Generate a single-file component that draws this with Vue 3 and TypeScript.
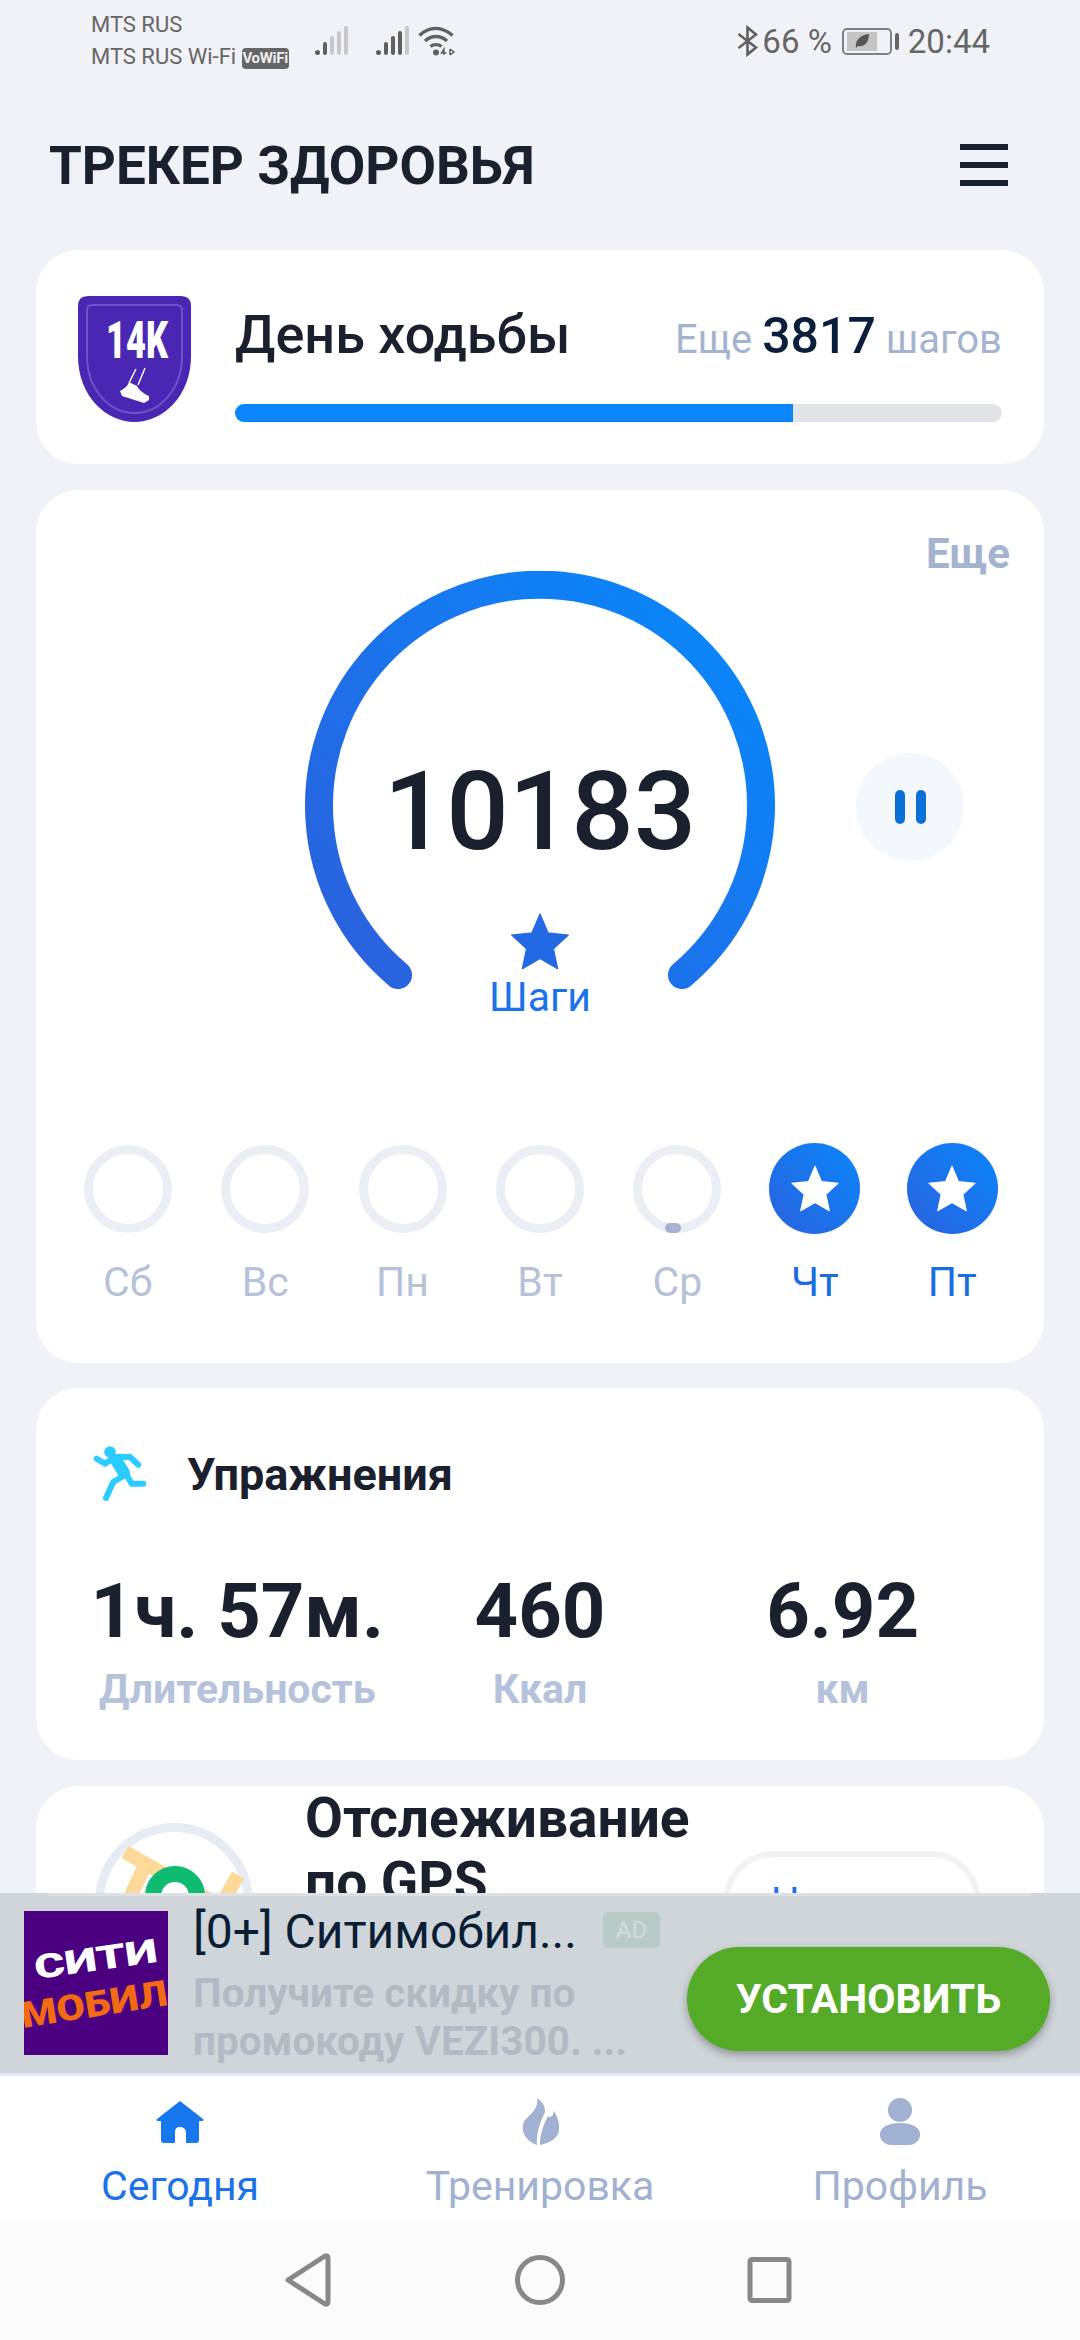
<script setup lang="ts">
import { computed } from "vue";

type DayState = "empty" | "started" | "done";

const STAR_POINTS = "12,1.5 15,8.6 22.6,9.4 17,14.5 18.6,22 12,18.2 5.4,22 7,14.5 1.4,9.4 9,8.6";
const STEP_GOAL = 14000;
const stepCount = 10183;

const stepsLeft = computed(() => STEP_GOAL - stepCount);
const goalPercent = computed(() => `${(stepCount / STEP_GOAL) * 100}%`);

const days: { label: string; state: DayState }[] = [
	{ label: "Сб", state: "empty" },
	{ label: "Вс", state: "empty" },
	{ label: "Пн", state: "empty" },
	{ label: "Вт", state: "empty" },
	{ label: "Ср", state: "started" },
	{ label: "Чт", state: "done" },
	{ label: "Пт", state: "done" }
];

const stats = [
	{ value: "1ч. 57м.", label: "Длительность" },
	{ value: "460", label: "Ккал" },
	{ value: "6.92", label: "км" }
];
</script>

<template>
	<div class="app">
		<div class="scroll">
			<div class="status">
				<div class="carriers">
					<div>MTS RUS</div>
					<div class="carrier-two">MTS RUS Wi-Fi <span class="vowifi">VoWiFi</span></div>
				</div>
				<svg class="signal first" width="34" height="30" viewBox="0 0 34 30">
					<circle cx="2.5" cy="26.5" r="2.5" fill="#606060" />
					<rect x="8" y="16" width="4" height="13" rx="2" fill="#606060" />
					<rect x="15" y="10" width="4" height="19" rx="2" fill="#c8c8c8" />
					<rect x="22" y="5" width="4" height="24" rx="2" fill="#c8c8c8" />
					<rect x="29" y="0" width="4" height="29" rx="2" fill="#c8c8c8" />
				</svg>
				<svg class="signal" width="34" height="30" viewBox="0 0 34 30">
					<circle cx="2.5" cy="26.5" r="2.5" fill="#606060" />
					<rect x="8" y="16" width="4" height="13" rx="2" fill="#606060" />
					<rect x="15" y="10" width="4" height="19" rx="2" fill="#606060" />
					<rect x="22" y="5" width="4" height="24" rx="2" fill="#606060" />
					<rect x="29" y="0" width="4" height="29" rx="2" fill="#c8c8c8" />
				</svg>
				<svg class="wifi" width="38" height="30" viewBox="0 0 38 30">
					<g fill="none" stroke="#606060" stroke-width="3.4">
						<path d="M1.5 9.5C11 0 24 0 34.5 9.5" />
						<path d="M7 15C13.5 9 22.5 9 29 15" />
						<path d="M12.5 20.5C15.5 18 20.5 18 23.5 20.5" />
					</g>
					<circle cx="18" cy="26.5" r="3" fill="#606060" />
					<path d="M26 29V23L23.5 27H28.5M32 23V29M32 23L36 26L32 29" fill="none" stroke="#606060" stroke-width="1.5" />
				</svg>
				<div class="status-right">
					<svg class="bluetooth" width="20" height="28" viewBox="0 0 20 28" overflow="visible">
						<path d="M0.5 7L18 20.5L9.5 27.5V0.5L18 7.5L0.5 21" fill="none" stroke="#606060" stroke-width="2.6" />
					</svg>
					<span class="battery-text">66 %</span>
					<div class="battery">
						<div class="battery-body">
							<div class="battery-fill">
								<svg width="16" height="16" viewBox="0 0 16 16">
									<path d="M2 15C1 7 6 2 15 1C15 9 11 14 4 13Z" fill="#555" />
								</svg>
							</div>
						</div>
						<div class="battery-nub"></div>
					</div>
					<span class="clock">20:44</span>
				</div>
			</div>

			<div class="header">
				<h1 class="title">ТРЕКЕР ЗДОРОВЬЯ</h1>
				<div class="burger">
					<span></span>
					<span></span>
					<span></span>
				</div>
			</div>

			<section class="card goal-card">
				<svg class="goal-badge" width="113" height="126" viewBox="0 0 113 126">
					<path d="M10 0H103Q113 0 113 10V60C113 100 85 126 56.5 126C28 126 0 100 0 60V10Q0 0 10 0Z" fill="#4a27b3" />
					<path d="M14 9H99Q104 9 104 14V60C104 93 82 117 56.5 117C31 117 9 93 9 60V14Q9 9 14 9Z" fill="none" stroke="#6d52c9" stroke-width="2" />
					<text x="28" y="62" font-size="52" font-weight="900" fill="#fff" textLength="62" lengthAdjust="spacingAndGlyphs">14K</text>
					<path d="M58 73L51 87M67 72L60 89" stroke="#fff" stroke-width="1.4" />
					<path d="M42 95C46 93 50 90 51 86L59 90C61 94 66 98 71 100L71 104L66 107L44 100Z" fill="#fff" />
				</svg>
				<div class="goal-body">
					<div class="goal-row">
						<span class="goal-title">День ходьбы</span>
						<span class="goal-left">Еще <b>{{ stepsLeft }}</b> шагов</span>
					</div>
					<div class="goal-track">
						<div class="goal-fill" :style="{ width: goalPercent }"></div>
					</div>
				</div>
			</section>

			<section class="card steps-card">
				<span class="more">Еще</span>
				<div class="gauge">
					<svg class="gauge-arc" width="470" height="440" viewBox="0 0 470 440">
						<defs>
							<linearGradient id="arc" gradientUnits="userSpaceOnUse" x1="60" y1="400" x2="420" y2="60">
								<stop offset="0" stop-color="#2a62de" />
								<stop offset="1" stop-color="#0a86fa" />
							</linearGradient>
						</defs>
						<path d="M93 404A221 221 0 1 1 377 404" fill="none" stroke="url(#arc)" stroke-width="28" stroke-linecap="round" />
					</svg>
					<div class="gauge-center">
						<div class="step-count">{{ stepCount }}</div>
						<svg class="gauge-star" width="64" height="64" viewBox="0 0 24 24">
							<polygon :points="STAR_POINTS" fill="#2369e4" stroke="#2369e4" stroke-width="0.5" stroke-linejoin="round" />
						</svg>
						<div class="gauge-label">Шаги</div>
					</div>
				</div>
				<button class="pause">
					<span></span>
					<span></span>
				</button>
				<div class="days">
					<div v-for="day in days" :key="day.label" class="day" :class="{ done: day.state === 'done' }">
						<div class="day-mark">
							<div v-if="day.state === 'done'" class="day-filled">
								<svg width="52" height="52" viewBox="0 0 24 24">
									<polygon :points="STAR_POINTS" fill="#fff" stroke="#fff" stroke-width="0.5" stroke-linejoin="round" />
								</svg>
							</div>
							<div v-else class="day-ring">
								<span v-if="day.state === 'started'" class="day-dot"></span>
							</div>
						</div>
						<div class="day-label">{{ day.label }}</div>
					</div>
				</div>
			</section>

			<section class="card workout-card">
				<div class="workout-head">
					<svg width="60" height="60" viewBox="0 0 60 60">
						<circle cx="20" cy="8" r="5.8" fill="#2accff" />
						<g fill="none" stroke="#2accff" stroke-linecap="round" stroke-linejoin="round">
							<path d="M6.7 14.7L15 19.7L25 13H40L48.3 20.7" stroke-width="6" />
							<path d="M26 16L34 29" stroke-width="12" />
							<path d="M35 28L41.7 39.7H53.3" stroke-width="6" />
							<path d="M31.7 33L23.3 38L16 54" stroke-width="6" />
						</g>
					</svg>
					<span class="workout-title">Упражнения</span>
				</div>
				<div class="stats">
					<div v-for="stat in stats" :key="stat.label" class="stat">
						<div class="stat-value">{{ stat.value }}</div>
						<div class="stat-label">{{ stat.label }}</div>
					</div>
				</div>
			</section>

			<section class="card gps-card">
				<svg class="gps-map" width="158" height="158" viewBox="0 0 158 158">
					<circle cx="79" cy="79" r="74.5" fill="#fff" stroke="#e6ebf4" stroke-width="9" />
					<g fill="none" stroke="#fdd898" stroke-width="14">
						<path d="M30 29L120 80" />
						<path d="M50 42L28 90" />
						<path d="M143 52L122 90" />
					</g>
					<circle cx="80" cy="73" r="22" fill="#fff" stroke="#0fbb70" stroke-width="16" />
				</svg>
				<h2 class="gps-title">Отслеживание по GPS</h2>
				<button class="gps-start">Начать</button>
			</section>
		</div>

		<aside class="ad">
			<svg class="ad-logo" width="144" height="144" viewBox="0 0 144 144">
				<rect width="144" height="144" fill="#4b0082" />
				<text x="12" y="68" transform="rotate(-8 12 68)" font-size="33" font-weight="900" fill="#fff" textLength="124" lengthAdjust="spacingAndGlyphs">СИТИ</text>
				<text x="-1" y="117" transform="rotate(-9 -1 117)" font-size="36" font-weight="900" fill="#f26a12" textLength="148" lengthAdjust="spacingAndGlyphs">МОБИЛ</text>
			</svg>
			<div class="ad-text">
				<div class="ad-head">
					<span class="ad-title">[0+] Ситимобил...</span>
					<span class="ad-tag">AD</span>
				</div>
				<p class="ad-desc">Получите скидку по<br />промокоду VEZI300. ...</p>
			</div>
			<button class="ad-install">УСТАНОВИТЬ</button>
		</aside>

		<nav class="tabs">
			<div class="tab active">
				<div class="tab-icon">
					<svg width="48" height="42" viewBox="0 0 48 42">
						<path d="M24 0L47 18Q48 20 46 20H43V39Q43 42 40 42H30V31Q29 26 24 26Q19 26 19 31V42H8Q5 42 5 39V20H2Q0 20 1 18Z" fill="#1677ee" />
					</svg>
				</div>
				<span>Сегодня</span>
			</div>
			<div class="tab">
				<div class="tab-icon">
					<svg width="38" height="47" viewBox="0 0 38 47">
						<path d="M16 0C18 10 10 16 4 22C-1 30 2 42 16 47C15 38 18 26 24 14C24 6 20 3 16 0Z" fill="#a0b1d1" />
						<path d="M33 13C32 19 29 20 27 18C22 28 19 36 19 47C34 44 40 36 38 26C37 21 35 16 33 13Z" fill="#a0b1d1" />
					</svg>
				</div>
				<span>Тренировка</span>
			</div>
			<div class="tab">
				<div class="tab-icon">
					<svg width="42" height="47" viewBox="0 0 42 47">
						<circle cx="21" cy="12" r="12" fill="#a0b1d1" />
						<path d="M21 25C33 25 42 29 41 38C40 44 34 47 30 47H12C8 47 2 44 1 38C0 29 9 25 21 25Z" fill="#a0b1d1" />
					</svg>
				</div>
				<span>Профиль</span>
			</div>
		</nav>

		<div class="sysnav">
			<svg width="60" height="60" viewBox="0 0 60 60">
				<path d="M8 30L45 6Q48 5 48 8V52Q48 55 45 54Z" fill="none" stroke="#888" stroke-width="5" stroke-linejoin="round" />
			</svg>
			<svg width="60" height="60" viewBox="0 0 60 60">
				<circle cx="30" cy="30" r="22.5" fill="none" stroke="#888" stroke-width="5" />
			</svg>
			<svg width="60" height="60" viewBox="0 0 60 60">
				<rect x="10" y="9.5" width="39" height="41" rx="2" fill="none" stroke="#888" stroke-width="5" />
			</svg>
		</div>
	</div>
</template>

<style scoped>
.app {
	display: flex;
	flex-direction: column;
	width: 1080px;
	height: 2340px;
	overflow: hidden;
	background: #f0f2f7;
	font-family: Roboto, "Noto Sans", sans-serif;
	color: #1a202e;
}

.scroll {
	flex: 1;
	min-height: 0;
	overflow: hidden;
}

/* status bar */
.status {
	display: flex;
	align-items: flex-start;
	height: 100px;
	padding: 9px 90px 0 91px;
	box-sizing: border-box;
	color: #666;
}

.carriers {
	width: 196px;
	font-size: 22px;
	line-height: 32px;
}

.carrier-two {
	white-space: nowrap;
}

.vowifi {
	display: inline-block;
	width: 47px;
	height: 21px;
	border-radius: 4px;
	background: #666;
	color: #eee;
	font-size: 15px;
	font-weight: 700;
	letter-spacing: -0.3px;
	line-height: 21px;
	text-align: center;
	vertical-align: 1px;
}

.signal {
	margin-top: 17px;
	margin-left: 27px;
}

.signal.first {
	margin-left: 28px;
}

.wifi {
	margin-top: 17px;
	margin-left: 8px;
}

.status-right {
	display: flex;
	align-items: center;
	height: 32px;
	margin-top: 16px;
	margin-left: auto;
	font-size: 33px;
}

.bluetooth {
	margin-right: -2px;
}

.battery-text {
	margin-left: 6px;
}

.battery {
	display: flex;
	align-items: center;
	margin-left: 10px;
	margin-right: 9px;
}

.battery-body {
	width: 50px;
	height: 27px;
	padding: 2px 3px;
	box-sizing: border-box;
	border: 2px solid #808080;
	border-radius: 5px;
}

.battery-fill {
	display: flex;
	align-items: center;
	justify-content: center;
	width: 30px;
	height: 100%;
	background: #c4c4c4;
}

.battery-nub {
	width: 4px;
	height: 17px;
	margin-left: 3px;
	border-radius: 2px;
	background: #666;
}

/* page header */
.header {
	display: flex;
	align-items: center;
	justify-content: space-between;
	height: 130px;
	margin-bottom: 20px;
	padding: 0 72px 0 49px;
}

.title {
	margin: 2px 0 0;
	font-size: 53px;
	font-weight: 700;
	line-height: 60px;
}

.burger {
	display: flex;
	flex-direction: column;
	gap: 12px;
	width: 48px;
}

.burger span {
	height: 6px;
	background: #1a202e;
}

/* cards */
.card {
	box-sizing: border-box;
	margin: 0 36px 26px;
	border-radius: 42px;
	background: #fff;
}

.goal-card {
	display: flex;
	gap: 44px;
	height: 214px;
	padding: 46px 42px 42px 42px;
}

.goal-body {
	display: flex;
	flex: 1;
	flex-direction: column;
	justify-content: space-between;
}

.goal-row {
	display: flex;
	align-items: baseline;
	justify-content: space-between;
	height: 62px;
	margin-top: 8px;
}

.goal-title {
	font-size: 54px;
	font-weight: 500;
	line-height: 62px;
}

.goal-left {
	color: #a4b3d0;
	font-size: 40px;
}

.goal-left b {
	color: #0a1f3c;
	font-size: 50px;
	font-weight: 500;
}

.goal-track {
	height: 18px;
	overflow: hidden;
	border-radius: 9px;
	background: #e2e4e7;
}

.goal-fill {
	height: 100%;
	background: #0a86fa;
}

.steps-card {
	position: relative;
	height: 873px;
	margin-bottom: 25px;
	padding-top: 81px;
}

.more {
	position: absolute;
	top: 40px;
	right: 34px;
	color: #a4b3d0;
	font-size: 42px;
	font-weight: 700;
	line-height: 48px;
}

.gauge {
	position: relative;
	width: 470px;
	height: 572px;
	margin: 0 auto;
}

.gauge-arc {
	display: block;
}

.gauge-center {
	position: absolute;
	inset: 0;
	display: flex;
	flex-direction: column;
	align-items: center;
	padding-top: 186px;
	box-sizing: border-box;
}

.step-count {
	font-size: 110px;
	font-weight: 500;
	line-height: 110px;
}

.gauge-star {
	margin-top: 43px;
}

.gauge-label {
	margin-top: 1px;
	color: #1a73e8;
	font-size: 41px;
	line-height: 44px;
}

.pause {
	position: absolute;
	top: 263px;
	right: 80px;
	display: flex;
	align-items: center;
	justify-content: center;
	gap: 11px;
	width: 108px;
	height: 108px;
	padding: 0;
	border: none;
	border-radius: 50%;
	background: #f4f8fc;
}

.pause span {
	width: 10px;
	height: 34px;
	border-radius: 5px;
	background: #0b6fd8;
}

.days {
	display: grid;
	grid-template-columns: repeat(7, 1fr);
	padding: 0 23px;
}

.day {
	display: flex;
	flex-direction: column;
	align-items: center;
}

.day-mark {
	display: flex;
	align-items: center;
	justify-content: center;
	height: 91px;
}

.day-ring {
	position: relative;
	box-sizing: border-box;
	width: 88px;
	height: 88px;
	border: 9px solid #ebeef5;
	border-radius: 50%;
}

.day-dot {
	position: absolute;
	bottom: -9px;
	left: 23px;
	width: 16px;
	height: 10px;
	border-radius: 5px;
	background: #a4b3d0;
}

.day-filled {
	display: flex;
	align-items: center;
	justify-content: center;
	width: 91px;
	height: 91px;
	border-radius: 50%;
	background: linear-gradient(45deg, #2a62de, #0a86fa);
}

.day-label {
	margin-top: 25px;
	color: #b5c2d9;
	font-size: 41px;
	line-height: 46px;
}

.day.done .day-label {
	color: #1a6fe0;
}

.workout-card {
	height: 372px;
	padding-top: 50px;
}

.workout-head {
	display: flex;
	align-items: center;
	gap: 37px;
	height: 72px;
	padding-left: 54px;
}

.workout-title {
	font-size: 45px;
	font-weight: 700;
}

.stats {
	display: grid;
	grid-template-columns: repeat(3, 1fr);
	margin-top: 61px;
	padding: 0 50px;
}

.stat {
	text-align: center;
	white-space: nowrap;
}

.stat-value {
	font-size: 76px;
	font-weight: 700;
	line-height: 80px;
}

.stat-label {
	margin-top: 14px;
	color: #b5c2dc;
	font-size: 41px;
	font-weight: 700;
	line-height: 48px;
}

.gps-card {
	display: flex;
	align-items: flex-start;
	height: 300px;
	margin-bottom: 0;
	padding-left: 59px;
}

.gps-map {
	flex: none;
	margin-top: 37px;
}

.gps-title {
	width: 400px;
	margin: 0 0 0 52px;
	font-size: 55px;
	font-weight: 700;
	line-height: 64px;
}

.gps-start {
	box-sizing: border-box;
	width: 258px;
	height: 102px;
	margin-top: 65px;
	margin-left: auto;
	margin-right: 63px;
	padding: 0 0 0 42px;
	border: 6px solid #f0f2f6;
	border-radius: 51px;
	background: #fff;
	color: #1a73e8;
	font-family: inherit;
	font-size: 40px;
	text-align: left;
}

/* ad banner */
.ad {
	position: relative;
	display: flex;
	align-items: flex-start;
	box-sizing: border-box;
	height: 183px;
	padding-left: 24px;
	border-bottom: 3px solid #e2e7ef;
	background: #d0d5da;
}

.ad::before {
	content: "";
	position: absolute;
	top: 0;
	left: 48px;
	right: 49px;
	height: 3px;
	background: #dde1e6;
}

.ad-logo {
	flex: none;
	margin-top: 18px;
}

.ad-text {
	flex: none;
	width: 480px;
	margin-left: 25px;
	padding-top: 12px;
}

.ad-head {
	display: flex;
	align-items: flex-start;
	gap: 26px;
}

.ad-title {
	color: #0a1f35;
	font-size: 48px;
	line-height: 54px;
	white-space: nowrap;
}

.ad-tag {
	width: 57px;
	height: 36px;
	margin-top: 7px;
	border-radius: 5px;
	background: #b9cbc6;
	color: #cfd8d6;
	font-size: 24px;
	font-weight: 500;
	line-height: 36px;
	text-align: center;
}

.ad-desc {
	margin: 10px 0 0;
	color: #b3bac4;
	font-size: 40.5px;
	font-weight: 700;
	line-height: 48px;
	white-space: nowrap;
}

.ad-install {
	flex: none;
	width: 363px;
	height: 104px;
	margin-top: 54px;
	margin-left: auto;
	margin-right: 30px;
	padding: 0;
	border: none;
	border-radius: 52px;
	background: #55ab27;
	box-shadow: 0 4px 8px rgba(0, 0, 0, 0.3);
	color: #fff;
	font-family: inherit;
	font-size: 41px;
	font-weight: 700;
}

/* bottom tabs */
.tabs {
	display: grid;
	grid-template-columns: repeat(3, 1fr);
	box-sizing: border-box;
	height: 144px;
	padding-top: 22px;
	background: #fff;
}

.tab {
	display: flex;
	flex-direction: column;
	align-items: center;
	color: #a0b1d1;
	font-size: 41px;
	line-height: 48px;
}

.tab.active {
	color: #1a73e8;
}

.tab-icon {
	display: flex;
	align-items: center;
	height: 47px;
	margin-bottom: 17px;
}

.sysnav {
	display: flex;
	align-items: center;
	justify-content: center;
	gap: 170px;
	height: 120px;
	background: #fbfbfb;
}
</style>

<style>
body {
	background: #f0f2f7;
}
</style>
